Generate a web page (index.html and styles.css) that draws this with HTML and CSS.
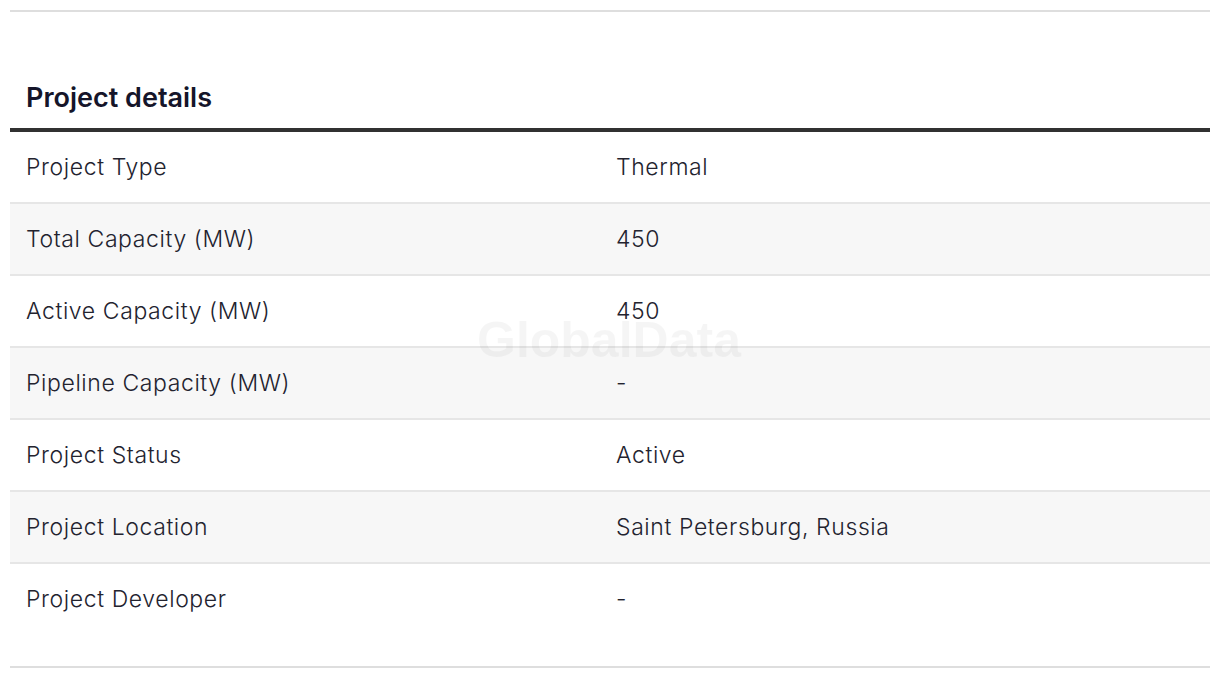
FILE: index.html
```html
<!DOCTYPE html>
<html lang="en">
<head>
<meta charset="utf-8">
<title>Project details</title>
<link rel="stylesheet" href="styles.css">
</head>
<body>
<div class="page">
  <div class="top-rule"></div>
  <section class="details">
    <h2 class="details-title">Project details</h2>
    <div class="table">
      <div class="row"><div class="cell">Project Type</div><div class="cell">Thermal</div></div>
      <div class="row alt"><div class="cell">Total Capacity (MW)</div><div class="cell">450</div></div>
      <div class="row"><div class="cell">Active Capacity (MW)</div><div class="cell">450</div></div>
      <div class="row alt"><div class="cell">Pipeline Capacity (MW)</div><div class="cell">-</div></div>
      <div class="row"><div class="cell">Project Status</div><div class="cell">Active</div></div>
      <div class="row alt"><div class="cell">Project Location</div><div class="cell">Saint Petersburg, Russia</div></div>
      <div class="row last"><div class="cell">Project Developer</div><div class="cell">-</div></div>
      <div class="watermark">GlobalData</div>
    </div>
  </section>
  <div class="bottom-rule"></div>
</div>
</body>
</html>
```

FILE: styles.css
```css
html, body {
  margin: 0;
  padding: 0;
  background: #ffffff;
}

.page {
  padding: 10px;
  font-family: Inter, "Noto Sans", "Liberation Sans", sans-serif;
  color: #23232f;
}

.top-rule {
  height: 2px;
  background: #dedede;
}

.details-title {
  margin: 0;
  padding: 70px 16px 0 16px;
  height: 46px;
  font-size: 27px;
  line-height: 31px;
  font-weight: 600;
  color: #15152a;
  border-bottom: 4px solid #313131;
}

.table {
  position: relative;
}

.row {
  display: grid;
  grid-template-columns: 590px 1fr;
  height: 70px;
  border-bottom: 2px solid #e6e6e6;
  align-items: center;
}

.row.alt {
  background: #f7f7f7;
}

.row.last {
  border-bottom: none;
}

.cell {
  padding: 0 16px;
  font-size: 23px;
  line-height: 30px;
  font-weight: 350;
  letter-spacing: 0.6px;
}

.watermark {
  position: absolute;
  left: 467px;
  top: 178px;
  font-family: "Liberation Sans", Arial, sans-serif;
  font-weight: 700;
  font-size: 50px;
  line-height: 60px;
  color: rgba(0, 0, 0, 0.04);
  pointer-events: none;
}

.bottom-rule {
  margin-top: 32px;
  height: 2px;
  background: #dedede;
}
```
